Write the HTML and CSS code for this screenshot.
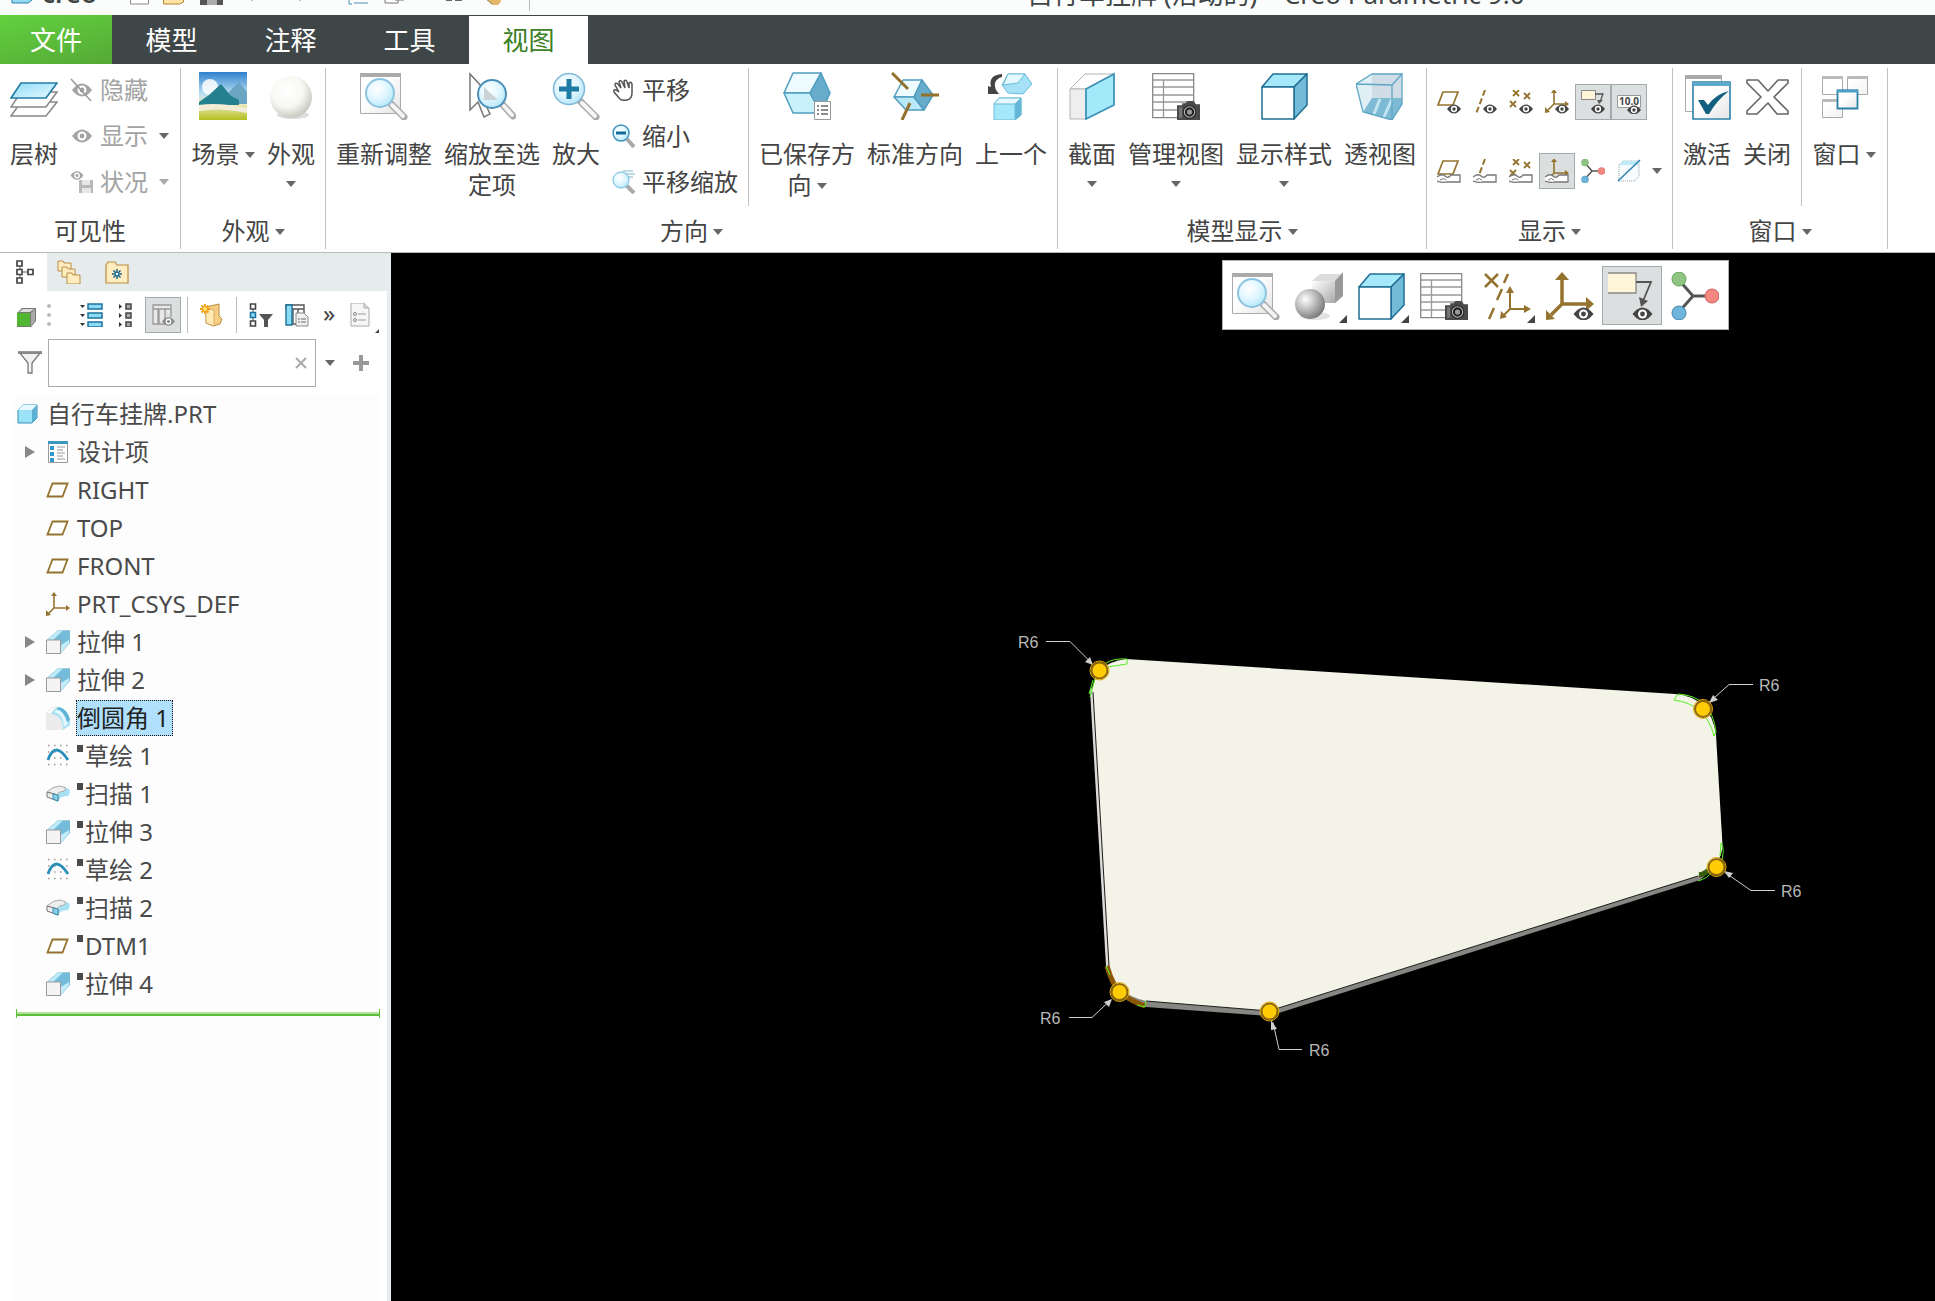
FILE: index.html
```html
<!DOCTYPE html>
<html lang="zh-CN">
<head>
<meta charset="utf-8">
<title>自行车挂牌 (活动的) – Creo Parametric 9.0</title>
<link rel="stylesheet" href="styles.css">
</head>
<body>
<svg class="sprite" aria-hidden="true">
  <defs>
    <radialGradient id="gLens" cx=".4" cy=".35" r=".7"><stop offset="0" stop-color="#fff"/><stop offset=".5" stop-color="#e2f7ff"/><stop offset="1" stop-color="#b5e6fa"/></radialGradient>
    <radialGradient id="gBall" cx=".4" cy=".35" r=".65"><stop offset="0" stop-color="#fff"/><stop offset=".6" stop-color="#f8f8f3"/><stop offset="1" stop-color="#c9cac1"/></radialGradient>
    <radialGradient id="gGrayBall" cx=".35" cy=".35" r=".7"><stop offset="0" stop-color="#fff"/><stop offset="1" stop-color="#777"/></radialGradient>
    <linearGradient id="gBlue" x1="0" y1="0" x2="1" y2="1"><stop offset="0" stop-color="#8edbf7"/><stop offset="1" stop-color="#e8faff"/></linearGradient>
    <linearGradient id="gSky" x1="0" y1="0" x2="0" y2="1"><stop offset="0" stop-color="#2f80cf"/><stop offset=".45" stop-color="#b9e0f2"/><stop offset=".68" stop-color="#e9e9b8"/><stop offset="1" stop-color="#b4bf1e"/></linearGradient>
    <linearGradient id="gGray" x1="0" y1="0" x2="1" y2="1"><stop offset="0" stop-color="#fff"/><stop offset="1" stop-color="#a9a9a9"/></linearGradient>
    <linearGradient id="gPage" x1="0" y1="0" x2="1" y2="1"><stop offset=".4" stop-color="#fff"/><stop offset="1" stop-color="#e4e4e4"/></linearGradient>
  </defs>

  <symbol id="eye" viewBox="0 0 20 14"><path d="M0 7Q10-6 20 7Q10 20 0 7Z" fill="currentColor"/><circle cx="10" cy="7" r="4.5" fill="#fff"/><circle cx="10" cy="7" r="2.4" fill="currentColor"/></symbol>
  <symbol id="camera" viewBox="0 0 22 19"><path d="M1 4h4V2h3l2-2h6l2 3h4v15H0V4z" fill="#4a4a4a"/><circle cx="12" cy="10.500" r="6.500" fill="#222"/><circle cx="12" cy="10.500" r="5" fill="none" stroke="#bbb"/><circle cx="12" cy="10.500" r="2.500" fill="#999"/><path d="M2 6h3v10H2z" fill="#777"/></symbol>
  <symbol id="hand" viewBox="0 0 24 10"><path d="M0 4Q5 0 8 3t6-1h9v7H9Q6 10 0 8" fill="#fff" stroke="#777" stroke-width="1.300"/><path d="M3 7q4-3 6 0" fill="none" stroke="#777"/></symbol>

  <symbol id="layers" viewBox="0 0 48 48"><g stroke="#888" stroke-width="1.500" fill="#fff"><path d="M11 30h36L36 44H1z"/><path d="M11 20h36L36 35H1z"/></g><path d="M11 11h36L36 26H1z" fill="url(#gBlue)" stroke="#247ca6" stroke-width="1.700"/></symbol>
  <symbol id="scene" viewBox="0 0 48 48"><path d="M0 0h48v48H0z" fill="url(#gSky)"/><circle cx="11" cy="15" r="8" fill="#fff" opacity=".85"/><path d="M28 22l12-12 8 10v12H28z" fill="#6aa6c4"/><path d="M0 30l10-7 12-11 10 12 8 4v5H0z" fill="#23808d"/><path d="M0 33q20-3 48 3v5q-24-6-48-2z" fill="#f3ecd6"/></symbol>
  <symbol id="ball" viewBox="0 0 48 48"><ellipse cx="26" cy="43" rx="16" ry="4" fill="#ddd"/><circle cx="24" cy="25" r="21" fill="url(#gBall)"/></symbol>
  <symbol id="refit" viewBox="0 0 48 48"><path d="M.5 1.500h40v40H.5z" fill="url(#gPage)" stroke="#aaa"/><path d="M0 1h41v4H0z" fill="#aaa"/><path d="M31 32l13 13" stroke="#aaa" stroke-width="7" stroke-linecap="round"/><path d="M32 33l11 11" stroke="#f4f4f4" stroke-width="4" stroke-linecap="round"/><circle cx="20" cy="21" r="14" fill="url(#gLens)" stroke="#8cc4e0" stroke-width="2"/></symbol>
  <symbol id="zoomsel" viewBox="0 0 48 48"><path d="M2 2v36l8-8 6 15 6-3-6-13 10-1z" fill="#fff" stroke="#777" stroke-width="1.500"/><path d="M35 33l10 11" stroke="#aaa" stroke-width="7" stroke-linecap="round"/><path d="M36 34l8 9" stroke="#f4f4f4" stroke-width="4" stroke-linecap="round"/><circle cx="24" cy="22" r="14" fill="url(#gLens)" stroke="#4a90b8" stroke-width="2"/><path d="M16 15v13h14z" fill="#ccd3d6"/></symbol>
  <symbol id="zoomin" viewBox="0 0 48 48"><path d="M28 29l16 16" stroke="#aaa" stroke-width="7" stroke-linecap="round"/><path d="M30 31l13 13" stroke="#f6f6f6" stroke-width="4" stroke-linecap="round"/><circle cx="17" cy="17" r="15.500" fill="url(#gLens)" stroke="#7fb9d6" stroke-width="1.600"/><path d="M17 7v20M7 17h20" stroke="#1d7ba5" stroke-width="5"/></symbol>
  <symbol id="saved" viewBox="0 0 48 48"><g stroke="#4f9dc0" stroke-width="1.500" stroke-linejoin="round"><path d="M10 1h28L27 21H1z" fill="#eefbff"/><path d="M1 21h26l11 20H10z" fill="#c9f1fc"/><path d="M38 1l9 20-9 20-11-20z" fill="#67adcb"/></g><path d="M31.500 29.500h16v18h-16z" fill="#fff" stroke="#999"/><path d="M34 34h2m2 0h7M34 38h2m2 0h7M34 42h2m2 0h7" stroke="#666" stroke-width="1.300"/></symbol>
  <symbol id="standard" viewBox="0 0 48 48"><g stroke="#4f9dc0" stroke-width="1.500" stroke-linejoin="round"><path d="M12 8h19l-8 17H3z" fill="#eefbff"/><path d="M3 25h20l10 13H15z" fill="#b9e9f8"/><path d="M31 8l11 15-9 15-10-13z" fill="#67adcb"/></g><path d="M1 1l16 16M30 23h18M19 31l-8 17" stroke="#94702d" stroke-width="3"/></symbol>
  <symbol id="prev" viewBox="0 0 48 48"><path d="M15 2Q1 3 4 15L1 14v8h11l-3-4Q5 8 15 5z" fill="#444"/><g stroke="#6bbbd8" stroke-linejoin="round"><path d="M21 2h17l7 10-9 10-15-1-6-8z" fill="#a5e2f7"/><path d="M21 2h17l-7 9-15 2z" fill="#e4f8ff"/><path d="M7 32l5-6h22v17l-6 5H7z" fill="#a5e8fa"/><path d="M7 32l5-6h22l-6 6z" fill="#e4f8ff"/><path d="M28 32l6-6v17l-6 5z" fill="#64b6d6"/></g></symbol>
  <symbol id="section" viewBox="0 0 48 48"><g stroke="#b4b4b4" stroke-linejoin="round"><path d="M2 17L17 2h29L18 17z" fill="#fff"/><path d="M2 17h16v30H2z" fill="#eee"/></g><path d="M18 17L46 2v31L18 47z" fill="#a4e9fa" stroke="#3b8fb4" stroke-width="1.700"/></symbol>
  <symbol id="views" viewBox="0 0 48 48"><path d="M.7 1.700h41v44h-41z" fill="#fff" stroke="#888" stroke-width="1.300"/><path d="M1 8h40M1 15h40M1 23h40M1 30h40M1 38h40M11.500 8v37" stroke="#999" stroke-width="1.300"/><use href="#camera" x="25" y="29" width="23" height="20"/></symbol>
  <symbol id="cube" viewBox="0 0 48 48"><g stroke="#1f6f93" stroke-width="1.500" stroke-linejoin="round"><path d="M2 15L13 2h34L34 15z" fill="#a5e8fa"/><path d="M34 15L47 2v31L34 47z" fill="#73bcd9"/><path d="M2 15h32v32H2z" fill="#fff"/></g></symbol>
  <symbol id="persp" viewBox="0 0 48 48"><path d="M0 12L16 2h30v30L36 48 7 40z" fill="#e0eff5"/><path d="M16 2h30v24H16z" fill="#d0dde6"/><path d="M7 40l9-14h30v7L36 48z" fill="#7dbad4"/><path d="M18 42l6-15M28 45l8-18" stroke="#c3e4f0" stroke-width="3" fill="none"/><path d="M0 12l36 1v35L7 40zM0 12L16 2h30L36 13M46 2v30L36 48" stroke="#5fa6c5" stroke-width="1.300" fill="none"/></symbol>
  <symbol id="activate" viewBox="0 0 48 48"><path d="M2.500 3.500h36v36h-36z" fill="#fff" stroke="#aaa"/><path d="M2 3h37v4H2z" fill="#aaa"/><path d="M10 10h37v37H10z" fill="url(#gPage)" stroke="#2c80a8" stroke-width="1.600"/><path d="M10 10h37v4H10z" fill="#5ca9ca"/><path d="M15 28h6l4 5Q33 22 46 19 34 28 26 42h-3z" fill="#125f80"/></symbol>
  <symbol id="close" viewBox="0 0 48 48"><path d="M4 8h11l10 11L35 8h10v3L31 25l14 14v3H34L25 31 14 42H4v-3l14-14L4 11z" fill="#fff" stroke="#666" stroke-width="1.600" stroke-linejoin="round"/></symbol>
  <symbol id="windows" viewBox="0 0 48 48"><g fill="url(#gPage)" stroke="#aaa"><path d="M2.500 4.500h20v18h-20zM27.500 4.500h20v18h-20zM2.500 27.500h20v18h-20z"/></g><path d="M2 4h21v3H2zM27 4h21v3H27zM2 27h21v3H2z" fill="#bbb"/><path d="M17.500 18.500h20v18h-20z" fill="url(#gPage)" stroke="#2c80a8" stroke-width="1.800"/><path d="M17 17.500h21v3H17z" fill="#4c9fc4"/></symbol>
  <symbol id="shade" viewBox="0 0 48 48"><ellipse cx="20" cy="44" rx="15" ry="4" fill="#e2e2e2"/><path d="M17 9l8-7h23v22l-8 7H17z" fill="#ddd"/><path d="M40 9l8-9v24l-8 7z" fill="#999"/><path d="M17 9h23v22H17z" fill="url(#gGray)"/><circle cx="15" cy="32" r="15" fill="url(#gGrayBall)"/></symbol>
  <symbol id="datumall" viewBox="0 0 48 48"><g stroke="#94732f" stroke-width="2.500" fill="none"><path d="M2 2l13 13M15 2L2 15M25 2l-4 9M19 17l-5 11M11 36L6 47"/><path d="M27 19v18h18M27 37l-8 8" stroke-width="2"/></g><path d="M27 14l4 7h-8zM48 37l-7-4v8zM17 47l1-8 6 6z" fill="#94732f"/></symbol>
  <symbol id="csysbig" viewBox="0 0 48 48"><path d="M16 6v26h26M16 32L5 43" stroke="#94732f" stroke-width="3.500" fill="none"/><path d="M16 0l7 8H9zM48 32l-8-7v14zM0 48v-10l9 9z" fill="#94732f"/><use href="#eye" x="27" y="35" width="21" height="14" color="#444"/></symbol>
  <symbol id="notebig" viewBox="0 0 48 48"><path d="M-4 1h32v20H-4z" fill="#fff5d9" stroke="#888" stroke-width="1.300"/><path d="M28 10h15l-8 19" fill="none" stroke="#555" stroke-width="1.800"/><path d="M31 25l9 4-7 6z" fill="#555"/><use href="#eye" x="24" y="35" width="21" height="14" color="#444"/></symbol>
  <symbol id="nodes" viewBox="0 0 48 48"><path d="M7 7l15 17-15 17M22 24h19" fill="none" stroke="#555" stroke-width="3"/><circle cx="8" cy="7" r="7" fill="#90c482" stroke="#67a457"/><circle cx="8" cy="41" r="7" fill="#6db5da" stroke="#4488b0"/><circle cx="41" cy="24" r="7" fill="#f58782" stroke="#c9615c"/></symbol>

  <symbol id="hide" viewBox="0 0 24 24"><use href="#eye" x="2" y="5" width="20" height="14"/><path d="M1 1l20 22" stroke="#999" stroke-width="1.500"/></symbol>
  <symbol id="show" viewBox="0 0 24 24"><use href="#eye" x="2" y="5" width="20" height="14"/></symbol>
  <symbol id="status" viewBox="0 0 24 24"><use href="#eye" x="0" y="1" width="14" height="9"/><path d="M9 10h14v13H9z" fill="#b9b9b9"/><path d="M12 10h8v5h-8zM12 18h9v5h-9z" fill="#e7e7e7"/></symbol>
  <symbol id="pan" viewBox="0 0 24 24"><path d="M8 21L2 14q-1-3 2-2l3 2L3 7q0-3 3-1l3 4-2-6q1-3 3 0l3 6-1-7q2-2 3 1l2 6V5q2-2 3 1v9q0 6-5 7-5 1-7-1z" fill="#fff" stroke="#555" stroke-width="1.500"/></symbol>
  <symbol id="zoomout" viewBox="0 0 24 24"><path d="M15 15l7 8" stroke="#aaa" stroke-width="4"/><circle cx="9" cy="9" r="8" fill="url(#gLens)" stroke="#4192bb" stroke-width="1.500"/><path d="M4 9h10" stroke="#126c98" stroke-width="3"/></symbol>
  <symbol id="panzoom" viewBox="0 0 24 24"><path d="M14 15l8 8" stroke="#aaa" stroke-width="4"/><circle cx="9" cy="10" r="8" fill="url(#gLens)" stroke="#90cbe3" stroke-width="1.300"/><path d="M11 1h10M14 4h9M16 7h5" stroke="#78b7d2"/></symbol>

  <symbol id="plane" viewBox="0 0 24 24"><path d="M6.500 5.500h15l-5 13h-15z" fill="#fff" stroke="#94732f" stroke-width="1.800"/></symbol>
  <symbol id="csys" viewBox="0 0 24 24"><path d="M8 2v14h14M8 16l-6 6" stroke="#94732f" stroke-width="1.600" fill="none"/><path d="M8 0l3 4H5zM24 16l-4-3v6zM0 24v-6l5 5z" fill="#94732f"/></symbol>
  <symbol id="dPlane" viewBox="0 0 24 24"><path d="M6 2h15l-5 13H1z" fill="none" stroke="#94732f" stroke-width="1.700"/></symbol>
  <symbol id="dAxis" viewBox="0 0 24 24"><path d="M12 0L3 24" stroke="#94732f" stroke-width="2" stroke-dasharray="6 3"/></symbol>
  <symbol id="dPoint" viewBox="0 0 24 24"><path d="M4 0l6 6M10 0L4 6M15 3l6 6M21 3l-6 6M1 11l6 6M7 11l-6 6" stroke="#94732f" stroke-width="1.800"/></symbol>
  <symbol id="dCsys" viewBox="0 0 24 24"><path d="M9 1v13h14M9 14l-7 7" stroke="#94732f" stroke-width="1.600" fill="none"/><path d="M9-1l3 4H6zM24 14l-4-3v6zM0 23v-6l5 5z" fill="#94732f"/></symbol>
  <symbol id="dNote" viewBox="0 0 24 24"><path d="M.5.5h14v9H.500z" fill="#fff5d9" stroke="#888"/><path d="M14 4h8l-3 8" stroke="#555" fill="none" stroke-width="1.300"/><path d="M16 10h6l-4 4z" fill="#555"/></symbol>
  <symbol id="section24" viewBox="0 0 24 24"><path d="M2 6l4-4h16v15l-4 5H2z" fill="#f6fcff" stroke="#999" stroke-dasharray="1 1"/><path d="M2 6l4-4h16v4H2z" fill="#bfeaf8"/><path d="M1 22L23 1" stroke="#2d83aa" stroke-width="1.500"/></symbol>

  <symbol id="treeTab" viewBox="0 0 24 24"><path d="M4 6v12M7 12h7" stroke="#555"/><g fill="#fff" stroke="#444" stroke-width="1.700"><path d="M1 1h5v5H1zM1 9.500h5v5H1zM12 9.500h5v5h-5zM1 18h5v5H1z"/></g></symbol>
  <symbol id="folders" viewBox="0 0 24 24"><g fill="#ffedc0" stroke="#b98d45"><path d="M1 1h5l1 2h7v8H1z"/><path d="M5 7h5l1 2h7v8H5z"/><path d="M10 13h5l1 2h7v9H10z"/></g></symbol>
  <symbol id="favs" viewBox="0 0 24 24"><path d="M1 5l2-3h7l2 3h11v18H1z" fill="#ffedc0" stroke="#b98d45" stroke-width="1.200"/><path d="M12 9v10M7 14h10M8.500 10.500l7 7M15.500 10.500l-7 7" stroke="#11618a" stroke-width="1.500"/><circle cx="12" cy="14" r="1.300" fill="#fff"/></symbol>
  <symbol id="greencube" viewBox="0 0 24 24"><path d="M2 10l5-5h14v13l-5 6H2z" fill="#777"/><path d="M4 9l4-3h11l-4 3z" fill="#ddd"/><path d="M2 10h13v13H2z" fill="#50b731"/><path d="M16 10l4-4v12l-4 5z" fill="#aaa"/></symbol>
  <symbol id="expand" viewBox="0 0 24 24"><path d="M1 2h5L3.500 5zM1 11h5l-2.500 3zM1 20h5l-2.500 3z" fill="#333"/><g fill="#8cdcf8" stroke="#1c729b" stroke-width="1.500"><path d="M9 1h14v5H9zM9 10h14v5H9zM9 19h14v5H9z"/></g></symbol>
  <symbol id="collapse" viewBox="0 0 24 24"><path d="M4 1v5l3-2.500zM4 10v5l3-2.500zM4 19v5l3-2.500z" fill="#333"/><g fill="#aaa" stroke="#444" stroke-width="1.500"><path d="M11 1h5v5h-5zM11 10h5v5h-5zM11 19h5v5h-5z"/></g></symbol>
  <symbol id="columns" viewBox="0 0 24 24"><path d="M2 2h18v4H2zM2 6h5v15H2zM8 6h6v15H8zM14 6h6v8" fill="#e8e8e8" stroke="#999" stroke-width="1.300"/><use href="#eye" x="11" y="14" width="13" height="9" color="#888"/></symbol>
  <symbol id="newfolder" viewBox="0 0 24 24"><path d="M6 4l13-3v12l3 3-2 5-7 2-7-3z" fill="#f7cf83" stroke="#b98d45"/><path d="M6 5l8 2v16l-8-3z" fill="#ffe9b5" stroke="#c99b50" stroke-width=".7"/><path d="M5 1v10M0 6h10M1.500 2.500l7 7M8.500 2.500l-7 7" stroke="#f29b0c" stroke-width="1.800"/><circle cx="5" cy="6" r="2" fill="#ffe37c"/></symbol>
  <symbol id="treefilter" viewBox="0 0 24 24"><path d="M4 3v18" stroke="#555"/><g fill="#fff" stroke="#444" stroke-width="1.600"><path d="M1.500 1h5v5h-5zM1.500 18h5v5h-5z"/><path d="M1.500 9.500h5v5h-5z" fill="#8cdcf8" stroke="#1c729b"/></g><path d="M10 11h14l-5 6v7h-4v-7z" fill="#555"/></symbol>
  <symbol id="treecols" viewBox="0 0 24 24"><path d="M1 2h18v4H1zM8 6h5v15H8zM13 6h6v5" fill="#fff" stroke="#555" stroke-width="1.400"/><path d="M1 2h6v20H1z" fill="#8cdcf8" stroke="#1c729b" stroke-width="1.400"/><path d="M11 10h8l4 4v9H11z" fill="#f1f1f1" stroke="#888"/><path d="M13 16h2m1 0h5M13 19h2m1 0h5" stroke="#666"/></symbol>
  <symbol id="page" viewBox="0 0 24 24"><path d="M2 0h13l5 5v18H2z" fill="#f6f6f6" stroke="#aaa"/><path d="M15 0v5h5" fill="#ddd" stroke="#aaa"/><circle cx="6" cy="11" r="1.500" fill="none" stroke="#888"/><circle cx="6" cy="17" r="1.500" fill="none" stroke="#888"/><path d="M9 11h8M9 17h8" stroke="#999"/></symbol>
  <symbol id="funnel" viewBox="0 0 24 24"><path d="M1 1h22l-9 11v10h-4V12z" fill="#f3f3f3" stroke="#777" stroke-width="1.300"/><path d="M0 1h24v2H0z" fill="#888"/></symbol>

  <symbol id="part" viewBox="0 0 24 24"><path d="M2 8l5-5h14v13l-5 5H2z" fill="#9be2f8" stroke="#3590b7"/><path d="M2 8l5-5h14l-5 5z" fill="#e6f9ff"/><path d="M16 8l5-5v13l-5 5z" fill="#5cb0d3"/></symbol>
  <symbol id="design" viewBox="0 0 24 24"><path d="M2.500 1.500h19v21h-19z" fill="#fff" stroke="#999"/><path d="M2 1h20v3H2z" fill="#3b97bf"/><path d="M4 6h4v4H4zM4 12h4v4H4zM4 18h4v4H4z" fill="#3197ca"/><path d="M11 7h8M11 10h6M11 13h8M11 16h6M11 19h8" stroke="#999"/></symbol>
  <symbol id="extrude" viewBox="0 0 24 24"><path d="M1 10L12 .500h12v12L14 24V10z" fill="#74bcda" stroke="#8dbccf" stroke-width=".6"/><path d="M1 10L12 .500h5L7 10z" fill="#bde9f8"/><path d="M15 23v-8l8-5v3z" fill="#c4ecf9"/><path d="M.5 10h14v13.500H.5z" fill="#f4f4f4" stroke="#999"/></symbol>
  <symbol id="round" viewBox="0 0 24 24"><path d="M6 1h6L9 8H0z" fill="#fafafa" stroke="#ddd" stroke-width=".7"/><path d="M0 8h7q10 1 10 16H0z" fill="#ebebeb"/><path d="M5 8q4-7 8-7 8 2 11 12v6l-7 5Q17 9 5 8z" fill="#a6dff3"/><path d="M10 4q9 0 12 14l-4 3Q17 8 8 6z" fill="#e2f7fd"/><path d="M12 1q9 1 12 13l-3 2Q18 5 11 3z" fill="#5fb5d8"/></symbol>
  <symbol id="sketch" viewBox="0 0 24 24"><path d="M2 1.500h21M2 8h21M2 14h21M2 20.500h21" stroke="#a09890" stroke-width="1.500" stroke-dasharray="1.500 4.500"/><path d="M2 16Q9-4 22 16" fill="none" stroke="#2a8fb9" stroke-width="2.800"/></symbol>
  <symbol id="sweep" viewBox="0 0 24 24"><path d="M1 10Q7 4 14 4l9 3q2 4-1 7-9 0-10 6L1 15z" fill="#a8e0f3"/><path d="M1 10Q7 4 14 4l6 2-2 3q-5 0-7 4z" fill="#eee" stroke="#aaa"/><path d="M1 10l11 3v6L1 15z" fill="#eee" stroke="#777"/><path d="M7 12v5l5 2v-6z" fill="#8fcfe6" stroke="#3a93b8"/></symbol>
</svg>

<header class="titlebar">
  <svg class="quick" width="540" height="24" viewBox="0 -9 540 24" aria-hidden="true">
    <path d="M12-6h20V0l-4 3H12z" fill="#93daf3" stroke="#2b82aa"/>
    <path d="M130.500-8h18V4h-18z" fill="#fff" stroke="#888"/><path d="M163.500-8h20v10l-4 2h-16z" fill="#ffe3a5" stroke="#b0832f"/>
    <path d="M200-8h23V5h-23z" fill="#555"/><path d="M205-8h13v7h-13z" fill="#d9edf8"/><path d="M207 0h10v5h-10z" fill="#aaa"/>
    <path d="M251 1l5-3M301 1l-5-3" stroke="#aaa"/>
    <path d="M349-8v12h3M354-1h14M354 3h14" stroke="#4c8fb2" fill="none"/><path d="M385-4h13v7h-13zM395-8h9v8h-9z" fill="#fff" stroke="#777"/>
    <path d="M446 0h6M455 0h7" stroke="#666" stroke-width="2"/><path d="M485-2h13v6h-6z" fill="#ddbc67" stroke="#987236"/><circle cx="496" cy="0" r="5" fill="#e6b968"/>
    <path d="M529.500-8v19" stroke="#bbb"/>
  </svg>
  <span class="brand">creo</span>
  <h1 class="title">自行车挂牌 (活动的) – Creo Parametric 9.0</h1>
</header>

<nav class="tabs">
  <button class="tab tab-file">文件</button>
  <button class="tab">模型</button>
  <button class="tab">注释</button>
  <button class="tab">工具</button>
  <button class="tab tab-active">视图</button>
</nav>

<section class="ribbon">
  <div class="group">
    <div class="tools">
      <button class="big"><svg><use href="#layers"/></svg><span>层树</span></button>
      <div class="stack disabled">
        <button class="small"><svg><use href="#hide"/></svg>隐藏</button>
        <button class="small"><svg><use href="#show"/></svg>显示<i class="caret dark"></i></button>
        <button class="small"><svg><use href="#status"/></svg>状况<i class="caret"></i></button>
      </div>
    </div>
    <div class="group-name">可见性</div>
  </div>
  <div class="group">
    <div class="tools">
      <button class="big wide"><svg><use href="#scene"/></svg><span>场景<i class="caret"></i></span></button>
      <button class="big"><svg><use href="#ball"/></svg><span>外观</span><i class="caret below"></i></button>
    </div>
    <button class="group-name">外观<i class="caret"></i></button>
  </div>
  <div class="group">
    <div class="tools">
      <button class="big"><svg><use href="#refit"/></svg><span>重新调整</span></button>
      <button class="big"><svg><use href="#zoomsel"/></svg><span>缩放至选定项</span></button>
      <button class="big"><svg><use href="#zoomin"/></svg><span>放大</span></button>
      <div class="stack">
        <button class="small"><svg><use href="#pan"/></svg>平移</button>
        <button class="small"><svg><use href="#zoomout"/></svg>缩小</button>
        <button class="small"><svg><use href="#panzoom"/></svg>平移缩放</button>
      </div>
      <div class="subgroup">
        <button class="big"><svg><use href="#saved"/></svg><span>已保存方向<i class="caret"></i></span></button>
        <button class="big"><svg><use href="#standard"/></svg><span>标准方向</span></button>
        <button class="big"><svg><use href="#prev"/></svg><span>上一个</span></button>
      </div>
    </div>
    <button class="group-name">方向<i class="caret"></i></button>
  </div>
  <div class="group">
    <div class="tools">
      <button class="big"><svg><use href="#section"/></svg><span>截面</span><i class="caret below"></i></button>
      <button class="big"><svg><use href="#views"/></svg><span>管理视图</span><i class="caret below"></i></button>
      <button class="big"><svg><use href="#cube"/></svg><span>显示样式</span><i class="caret below"></i></button>
      <button class="big"><svg><use href="#persp"/></svg><span>透视图</span></button>
    </div>
    <button class="group-name">模型显示<i class="caret"></i></button>
  </div>
  <div class="group">
    <div class="tools toggles">
      <button class="icon"><svg viewBox="0 0 24 24"><use href="#dPlane" width="24" height="24"/><use href="#eye" x="10" y="14" width="14" height="10"/></svg></button>
      <button class="icon"><svg viewBox="0 0 24 24"><use href="#dAxis" width="24" height="24"/><use href="#eye" x="10" y="14" width="14" height="10"/></svg></button>
      <button class="icon"><svg viewBox="0 0 24 24"><use href="#dPoint" width="24" height="24"/><use href="#eye" x="10" y="14" width="14" height="10"/></svg></button>
      <button class="icon"><svg viewBox="0 0 24 24"><use href="#dCsys" width="24" height="24"/><use href="#eye" x="10" y="14" width="14" height="10"/></svg></button>
      <button class="icon on"><svg viewBox="0 0 24 24"><use href="#dNote" width="24" height="24"/><use href="#eye" x="10" y="14" width="14" height="10"/></svg></button>
      <button class="icon on"><svg viewBox="0 0 24 24"><path d="M.5 5.500h23v12H.500z" fill="#fff" stroke="#999"/><text x="12" y="15" class="dim">10.0</text><use href="#eye" x="10" y="15" width="14" height="10"/></svg></button>
      <span></span>
      <button class="icon"><svg viewBox="0 0 24 24"><use href="#dPlane" width="24" height="24"/><use href="#hand" x="0" y="14" width="24" height="10"/></svg></button>
      <button class="icon"><svg viewBox="0 0 24 24"><use href="#dAxis" width="24" height="24"/><use href="#hand" x="0" y="14" width="24" height="10"/></svg></button>
      <button class="icon"><svg viewBox="0 0 24 24"><use href="#dPoint" width="24" height="24"/><use href="#hand" x="0" y="14" width="24" height="10"/></svg></button>
      <button class="icon on"><svg viewBox="0 0 24 24"><use href="#dCsys" width="24" height="24"/><use href="#hand" x="0" y="14" width="24" height="10"/></svg></button>
      <button class="icon"><svg><use href="#nodes"/></svg></button>
      <button class="icon"><svg><use href="#section24"/></svg></button>
      <i class="caret"></i>
    </div>
    <button class="group-name">显示<i class="caret"></i></button>
  </div>
  <div class="group">
    <div class="tools">
      <button class="big"><svg><use href="#activate"/></svg><span>激活</span></button>
      <button class="big"><svg><use href="#close"/></svg><span>关闭</span></button>
      <div class="subgroup last">
        <button class="big wide"><svg><use href="#windows"/></svg><span>窗口<i class="caret"></i></span></button>
      </div>
    </div>
    <button class="group-name">窗口<i class="caret"></i></button>
  </div>
</section>

<main class="workspace">
  <aside class="panel">
    <div class="panel-tabs">
      <button class="ptab ptab-active"><svg><use href="#treeTab"/></svg></button>
      <button class="ptab"><svg><use href="#folders"/></svg></button>
      <button class="ptab"><svg><use href="#favs"/></svg></button>
    </div>
    <div class="panel-tools">
      <button class="icon"><svg><use href="#greencube"/></svg></button>
      <span class="grip"></span>
      <button class="icon"><svg><use href="#expand"/></svg></button>
      <button class="icon"><svg><use href="#collapse"/></svg></button>
      <button class="icon on"><svg><use href="#columns"/></svg></button>
      <span class="rule"></span>
      <button class="icon"><svg><use href="#newfolder"/></svg></button>
      <span class="rule"></span>
      <button class="icon"><svg><use href="#treefilter"/></svg></button>
      <button class="icon"><svg><use href="#treecols"/></svg></button>
      <button class="more">»</button>
      <button class="icon corner"><svg><use href="#page"/></svg></button>
    </div>
    <div class="filter">
      <svg class="funnel"><use href="#funnel"/></svg>
      <div class="field">
        <input type="text" aria-label="筛选">
        <button class="clear" aria-label="清除"><svg viewBox="0 0 12 12"><path d="M1 1l10 10M11 1L1 11" stroke="#aaa" stroke-width="2"/></svg></button>
      </div>
      <i class="caret"></i>
      <button class="add" aria-label="添加"><svg viewBox="0 0 16 16"><path d="M8 0v16M0 8h16" stroke="#999" stroke-width="4"/></svg></button>
    </div>
    <ul class="tree">
      <li class="root"><svg><use href="#part"/></svg><span>自行车挂牌.PRT</span></li>
      <li class="parent"><svg><use href="#design"/></svg><span>设计项</span></li>
      <li><svg><use href="#plane"/></svg><span>RIGHT</span></li>
      <li><svg><use href="#plane"/></svg><span>TOP</span></li>
      <li><svg><use href="#plane"/></svg><span>FRONT</span></li>
      <li><svg><use href="#csys"/></svg><span>PRT_CSYS_DEF</span></li>
      <li class="parent"><svg><use href="#extrude"/></svg><span>拉伸 1</span></li>
      <li class="parent"><svg><use href="#extrude"/></svg><span>拉伸 2</span></li>
      <li class="selected"><svg><use href="#round"/></svg><span>倒圆角 1</span></li>
      <li class="marked"><svg><use href="#sketch"/></svg><span>草绘 1</span></li>
      <li class="marked"><svg><use href="#sweep"/></svg><span>扫描 1</span></li>
      <li class="marked"><svg><use href="#extrude"/></svg><span>拉伸 3</span></li>
      <li class="marked"><svg><use href="#sketch"/></svg><span>草绘 2</span></li>
      <li class="marked"><svg><use href="#sweep"/></svg><span>扫描 2</span></li>
      <li class="marked"><svg><use href="#plane"/></svg><span>DTM1</span></li>
      <li class="marked"><svg><use href="#extrude"/></svg><span>拉伸 4</span></li>
      <li class="insert"></li>
    </ul>
  </aside>

  <div class="viewport">
    <svg class="model" viewBox="391 253 1544 1048" preserveAspectRatio="xMidYMin meet">
      <path d="M1091 690L1107 966Q1112 990 1122 996T1146 1007L1269 1016 1700 880 1716 866 1722 845 1700 720 1100 668z" fill="#868682"/>
      <path d="M1090 690L1106 966l4 10-16-290z" fill="#dedad8"/>
      <path d="M1126 659L1675 694Q1711 697 1716 735L1722.500 845Q1722 866 1698 876L1269 1011 1146 1001Q1112 993 1109 966L1093 692Q1092 664 1126 659z" fill="#f3f3e7"/>
      <path d="M1093 692L1109 966M1146 1001l123 10 429-135" fill="none" stroke="#1c1c1c"/>
      <path d="M1107 966Q1113 987 1122 994T1145 1006" fill="none" stroke="#8a5707" stroke-width="5"/>
      <path d="M1699 875q7-1 13-8" stroke="#365e0a" stroke-width="5" fill="none"/>
      <g fill="none" stroke="#59ee22">
        <path d="M1106 663q8-5 21-4v5l-20 3M1095 679l-5 18M1093 680l-4 14"/>
        <path d="M1674 700l4-6q34 2 38 38l-2 4Q1706 704 1674 700"/>
        <path d="M1720 856l1-13q5 6-1 23M1698 881q10-3 14-9M1106 966l4 9M1146 1001l-1 6-8-2"/>
      </g>
      <g fill="none" stroke="#cfcfcf">
        <path d="M1046 641.500h24l20 20M1069 1017.500h23l18-17M1302 1049.500h-23l-6-27M1753 684.500h-24l-20 18M1775 890.500h-24l-26-18"/>
      </g>
      <g fill="#cfcfcf"><path d="M1093 665l-8-3 5-5zM1112 999l-3 8-5-5zM1271 1020l6 9-6 1zM1709 703l4-8 5 5zM1724 871l9 2-4 5z"/></g>
      <g fill="#ffcc05" stroke="#8a6612" stroke-width="2"><circle cx="1099.500" cy="670.500" r="8"/><circle cx="1703" cy="709" r="8"/><circle cx="1716.500" cy="867" r="8"/><circle cx="1119.500" cy="992" r="8"/><circle cx="1269.500" cy="1011.500" r="8"/></g>
      <g fill="none" stroke="#e3ad0c"><circle cx="1099.500" cy="670.500" r="9.500"/><circle cx="1703" cy="709" r="9.500"/><circle cx="1716.500" cy="867" r="9.500"/><circle cx="1119.500" cy="992" r="9.500"/><circle cx="1269.500" cy="1011.500" r="9.500"/></g>
      <g class="radius"><text x="1018" y="648">R6</text><text x="1040" y="1024">R6</text><text x="1309" y="1056">R6</text><text x="1759" y="691">R6</text><text x="1781" y="897">R6</text></g>
    </svg>
    <div class="float-bar">
      <button><svg><use href="#refit"/></svg></button>
      <button class="corner"><svg><use href="#shade"/></svg></button>
      <button class="corner"><svg><use href="#cube"/></svg></button>
      <button><svg><use href="#views"/></svg></button>
      <button class="corner"><svg><use href="#datumall"/></svg></button>
      <button><svg><use href="#csysbig"/></svg></button>
      <button class="on"><svg><use href="#notebig"/></svg></button>
      <button><svg><use href="#nodes"/></svg></button>
    </div>
  </div>
</main>
</body>
</html>
```
FILE: styles.css
```css
*, *::before, *::after { box-sizing: border-box; }

body {
  margin: 0;
  min-height: 100vh;
  display: flex;
  flex-direction: column;
  background: #fff;
  color: #444;
  font: 24px/31px "Noto Sans", "Noto Sans CJK SC", sans-serif;
}

button {
  margin: 0;
  padding: 0;
  border: 0;
  background: none;
  color: inherit;
  font: inherit;
}

svg { display: block; flex: none; }
symbol { overflow: visible; }
.sprite { position: absolute; width: 0; height: 0; }

.caret {
  display: inline-block;
  border: 5px solid transparent;
  border-top: 6px solid #666;
  border-bottom: 0;
  vertical-align: 5px;
}

/* title bar */
.titlebar {
  position: relative;
  height: 15px;
  display: flex;
  align-items: flex-end;
  overflow: hidden;
  background: #fbfcfc;
  color: #3f4647;
}
.quick { width: 540px; height: 24px; }
.brand { position: absolute; left: 42px; bottom: 7px; font-size: 26px; font-weight: 600; line-height: 30px; }
.title {
  margin: 0 0 0 487px;
  padding-bottom: 6px;
  font-size: 26px;
  font-weight: 400;
  line-height: 30px;
  white-space: nowrap;
}

/* ribbon tabs */
.tabs { display: flex; height: 49px; background: #3f4647; color: #fff; }
.tab { width: 119px; font-size: 26px; line-height: 48px; }
.tab-file { width: 112px; background: linear-gradient(165deg, #62d13f, #55a935); }
.tab-active { margin-top: 1px; background: #fff; color: #3c7f24; }

/* ribbon */
.ribbon { display: flex; height: 189px; border-bottom: 1px solid #b5bcbc; }
.group {
  display: flex;
  flex-direction: column;
  margin: 4px 0 3px;
  border-right: 1px solid #c2c2c2;
}
.tools { display: flex; height: 138px; padding: 0 4px; }
.group-name { align-self: center; padding-top: 9px; white-space: nowrap; }
.group-name .caret, .big span .caret { margin-left: 5px; }

.big { display: flex; flex-direction: column; align-items: center; padding: 4px 6px 0; }
.big svg { width: 48px; height: 48px; margin-bottom: 18px; }
.big span { max-width: 96px; }
.big.wide { width: 76px; padding: 4px 0 0; }
.big .below { margin-top: 12px; }

.subgroup { display: flex; margin-left: 10px; padding-left: 4px; border-left: 1px solid #c2c2c2; }
.subgroup.last { margin-left: 4px; padding-right: 1px; }

.stack { display: flex; flex-direction: column; }
.small { display: flex; align-items: center; height: 46px; padding: 0 0 3px 6px; }
.small svg { width: 24px; height: 24px; margin-right: 6px; }
.small .caret { margin: 0 7px 0 11px; }
.disabled { color: #a3a3a3; }
.disabled .caret { border-top-color: #aaa; }
.disabled .caret.dark { border-top-color: #666; }

.toggles {
  display: grid;
  grid-template-columns: repeat(6, 36px) 21px;
  grid-auto-rows: 36px;
  row-gap: 33px;
  padding-top: 16px;
}
.toggles .caret { align-self: center; margin-left: 5px; justify-self: start; }
.icon {
  position: relative;
  display: flex;
  align-items: center;
  justify-content: center;
  width: 36px;
  height: 36px;
}
.icon svg { width: 24px; height: 24px; }
.on { background: #dcdfe0; border: 1px solid #a4aaab; }
.dim { font: bold 10px "Noto Sans", sans-serif; text-anchor: middle; fill: #444; }

/* work area */
.workspace { flex: 1; display: flex; }
.panel { width: 391px; flex: none; display: flex; flex-direction: column; border-right: 4px solid #e7edee; }
.panel-tabs { display: flex; height: 38px; background: #e5eceb; }
.ptab { width: 48px; padding-left: 10px; }
.ptab-active { width: 47px; padding-left: 16px; background: #fff; }
.ptab svg { width: 24px; height: 24px; }

.panel-tools { display: flex; align-items: center; height: 48px; padding-left: 9px; }
.grip { width: 4px; height: 22px; margin: 0 22px 0 2px; border-left: 4px dotted #bbb; }
.rule { width: 1px; height: 36px; margin: 0 6px; background: #bbb; }
.more { width: 28px; padding-bottom: 5px; }
.corner { position: relative; }
.corner::after {
  content: "";
  position: absolute;
  right: 2px;
  bottom: 2px;
  border: 4px solid #444;
  border-top-color: transparent;
  border-left-color: transparent;
}
.panel-tools .corner::after { right: 0; bottom: 0; border-width: 2px; }

.filter { display: flex; align-items: center; height: 48px; padding-left: 18px; }
.funnel { width: 24px; height: 24px; margin-right: 6px; }
.field { display: flex; align-items: center; width: 268px; height: 48px; border: 1px solid #a8adad; }
.field input { flex: 1; min-width: 0; height: 44px; border: 0; outline: 0; background: none; font: inherit; }
.clear { margin-right: 8px; }
.clear svg { width: 12px; height: 12px; }
.filter > .caret { margin: 0 18px 0 9px; }
.add svg { width: 16px; height: 16px; }

/* model tree */
.tree {
  flex: 1;
  margin: 8px 7px 0 13px;
  padding: 0;
  background: #fdfdfd;
  list-style: none;
  color: #4a4a4a;
}
.tree li { position: relative; display: flex; align-items: center; height: 38px; padding-left: 33px; }
.tree svg { width: 24px; height: 24px; margin-right: 6px; }
.tree span { border: 1px solid transparent; line-height: 34px; }
.tree .root { padding-left: 3px; }
.tree .parent { padding-left: 12px; }
.tree .parent::before {
  content: "";
  margin-right: 11px;
  border: 6px solid transparent;
  border-left: 10px solid #888;
  border-right: 0;
}
.tree .selected span { padding-right: 3px; border: 1px dotted #111; background: #b0e0fc; color: #222; }
.tree .marked span::before {
  content: "";
  display: inline-block;
  width: 6px;
  height: 7px;
  margin-right: 2px;
  background: #4a4a4a;
  vertical-align: 13px;
}
.tree .insert {
  height: 9px;
  margin: 6px 0 0 3px;
  padding: 0;
  border: solid #5fbf3d;
  border-width: 0 1px;
}
.tree .insert::before { content: ""; flex: 1; height: 4px; border-top: 2px solid #b0e29b; background: #5fbf3d; }

/* graphics area */
.viewport { position: relative; flex: 1; overflow: hidden; background: #000; }
.model { width: 100%; }
.radius { font: 16px "Liberation Sans", sans-serif; fill: #b8b8b8; }

.float-bar {
  position: absolute;
  top: 7px;
  right: 206px;
  width: 507px;
  height: 70px;
  display: grid;
  grid-template-columns: repeat(8, 60px);
  justify-content: space-between;
  padding: 5px 3px;
  border: 1px solid #aeb3b3;
  background: #fff;
}
.float-bar button { display: flex; align-items: center; justify-content: center; height: 59px; }
.float-bar svg { width: 48px; height: 48px; }
```
